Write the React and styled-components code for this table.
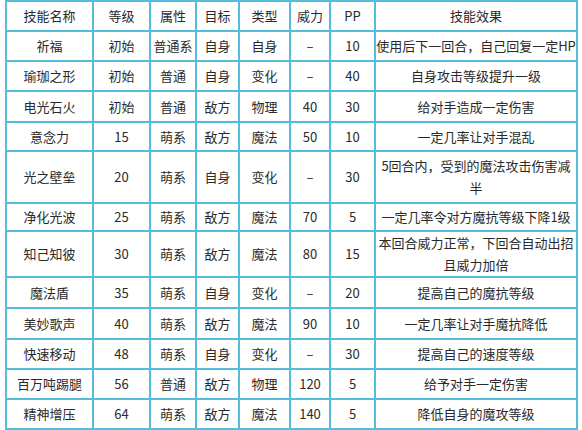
import React from 'react';
import styled, { createGlobalStyle } from 'styled-components';

const GlobalStyle = createGlobalStyle`
    html, body {
        margin: 0;
        padding: 0;
        background: #ffffff;
    }
`;

const cols = '85px 55px 44px 41px 49px 38px 43px 200px';

const header = ['技能名称', '等级', '属性', '目标', '类型', '威力', 'PP', '技能效果'];

const skills = [
    { h: 28, cells: ['祈福', '初始', '普通系', '自身', '自身', '–', '10', '使用后下一回合，自己回复一定HP'] },
    { h: 28, cells: ['瑜珈之形', '初始', '普通', '自身', '变化', '–', '40', '自身攻击等级提升一级'] },
    { h: 29, cells: ['电光石火', '初始', '普通', '敌方', '物理', '40', '30', '给对手造成一定伤害'] },
    { h: 27, cells: ['意念力', '15', '萌系', '敌方', '魔法', '50', '10', '一定几率让对手混乱'] },
    { h: 50, cells: ['光之壁垒', '20', '萌系', '自身', '变化', '–', '30', '5回合内，受到的魔法攻击伤害减半'] },
    { h: 26, cells: ['净化光波', '25', '萌系', '敌方', '魔法', '70', '5', '一定几率令对方魔抗等级下降1级'] },
    { h: 44, cells: ['知己知彼', '30', '萌系', '敌方', '魔法', '80', '15', '本回合威力正常，下回合自动出招且威力加倍'] },
    { h: 29, cells: ['魔法盾', '35', '萌系', '自身', '变化', '–', '20', '提高自己的魔抗等级'] },
    { h: 29, cells: ['美妙歌声', '40', '萌系', '敌方', '魔法', '90', '10', '一定几率让对手魔抗降低'] },
    { h: 28, cells: ['快速移动', '48', '萌系', '自身', '变化', '–', '30', '提高自己的速度等级'] },
    { h: 28, cells: ['百万吨踢腿', '56', '普通', '敌方', '物理', '120', '5', '给予对手一定伤害'] },
    { h: 28, cells: ['精神增压', '64', '萌系', '敌方', '魔法', '140', '5', '降低自身的魔攻等级'] },
];

const App = () => (
    <Page>
        <GlobalStyle />
        <Table>
            <Row $h={28}>
                {header.map(text => <Cell key={text}>{text}</Cell>)}
            </Row>
            {skills.map(skill => (
                <Row key={skill.cells[0]} $h={skill.h}>
                    {skill.cells.map((text, i) => (
                        <Cell key={i} $wrap={i === 7}>{text}</Cell>
                    ))}
                </Row>
            ))}
        </Table>
    </Page>
);

export default App;

const Page = styled.div`
    width: 582px;
    height: 430px;
    overflow: hidden;
    background: #ffffff;
    padding-left: 5px;
    box-sizing: border-box;
`;

const Table = styled.div`
    display: flex;
    flex-direction: column;
    gap: 2px;
    width: 573px;
    padding: 2px;
    box-sizing: border-box;
    background: #55bcdb;
`;

const Row = styled.div`
    display: grid;
    grid-template-columns: ${cols};
    gap: 2px;
    height: ${p => p.$h}px;
`;

const Cell = styled.div`
    display: flex;
    align-items: center;
    justify-content: center;
    background: #ffffff;
    color: #2a2a2a;
    font-family: "Noto Sans CJK SC", "Liberation Sans", sans-serif;
    font-size: 13px;
    line-height: ${p => (p.$wrap ? '22px' : '16px')};
    text-align: center;
    white-space: ${p => (p.$wrap ? 'normal' : 'nowrap')};
    overflow: hidden;
`;
